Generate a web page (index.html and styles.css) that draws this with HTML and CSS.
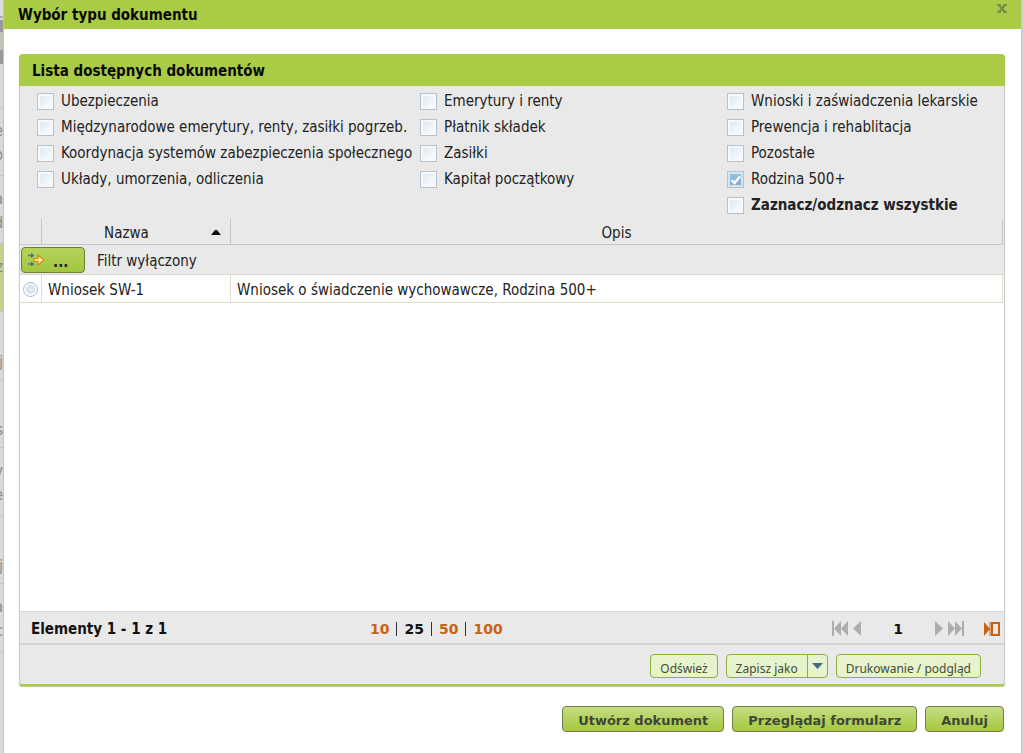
FILE: index.html
```html
<!DOCTYPE html>
<html lang="pl">
<head>
<meta charset="utf-8">
<title>Wybór typu dokumentu</title>
<link rel="stylesheet" href="styles.css">
</head>
<body>
<div class="backdrop" aria-hidden="true">
  <div class="edge-top"></div>
  <div class="edge-row"><span>e</span><span>o</span></div>
  <div class="edge-row"><span>a</span><span>d</span></div>
  <div class="edge-row selected"><span>z</span></div>
  <div class="edge-row low"><span>j</span></div>
  <div class="edge-row low"><span>s</span></div>
  <div class="edge-row"><span>y</span><span>e</span></div>
  <div class="edge-row low"><span>j</span></div>
  <div class="edge-row"><span>a</span><span>c</span></div>
</div>

<main class="dialog">
  <header class="dialog-head">
    <h1>Wybór typu dokumentu</h1>
    <button class="close" type="button" aria-label="Zamknij">
      <svg width="10" height="9" viewBox="0 0 10 9"><path d="M0 1h4M6 1h4M0 8h4M6 8h4" stroke="#75884a" stroke-width="1.4"/><path d="M2 1l6 7M8 1L2 8" stroke="#75884a" stroke-width="2"/></svg>
    </button>
  </header>

  <section class="panel">
    <h2>Lista dostępnych dokumentów</h2>

    <div class="filters">
      <div class="group">
        <label><input type="checkbox">Ubezpieczenia</label>
        <label><input type="checkbox">Międzynarodowe emerytury, renty, zasiłki pogrzeb.</label>
        <label><input type="checkbox">Koordynacja systemów zabezpieczenia społecznego</label>
        <label><input type="checkbox">Układy, umorzenia, odliczenia</label>
      </div>
      <div class="group">
        <label><input type="checkbox">Emerytury i renty</label>
        <label><input type="checkbox">Płatnik składek</label>
        <label><input type="checkbox">Zasiłki</label>
        <label><input type="checkbox">Kapitał początkowy</label>
      </div>
      <div class="group">
        <label><input type="checkbox">Wnioski i zaświadczenia lekarskie</label>
        <label><input type="checkbox">Prewencja i rehablitacja</label>
        <label><input type="checkbox">Pozostałe</label>
        <label><input type="checkbox" checked>Rodzina 500+</label>
        <label class="all"><input type="checkbox">Zaznacz/odznacz wszystkie</label>
      </div>
    </div>

    <div class="grid">
      <table>
        <colgroup><col class="col-pick"><col class="col-name"><col></colgroup>
        <thead>
          <tr class="head">
            <th></th>
            <th><div class="sortable"><span>Nazwa</span><svg width="10" height="5" viewBox="0 0 10 5"><path d="M0 5L4 0h2l4 5z" fill="#111"/></svg></div></th>
            <th>Opis</th>
          </tr>
          <tr class="filter">
            <td colspan="3"><div class="filter-line">
              <button class="filter-btn" type="button">
                <svg width="18" height="14" viewBox="0 0 18 14"><path d="M0 2.500h5M0 11h5" stroke="#5c7488" stroke-width="1.400"/><path d="M3 0l3.500 2.500L3 5zM3 8.500L6.500 11 3 13.500z" fill="#4f6a86"/><path d="M6 5.500h4V2l6 5-6 5V8.500H6z" fill="#ffe68c" stroke="#d08a1e" stroke-width="1.200"/></svg>
                <span>...</span>
              </button>
              <span>Filtr wyłączony</span>
            </div></td>
          </tr>
        </thead>
        <tbody>
          <tr>
            <td class="pick"><input type="radio" name="doc" aria-label="Wniosek SW-1"></td>
            <td>Wniosek SW-1</td>
            <td>Wniosek o świadczenie wychowawcze, Rodzina 500+</td>
          </tr>
        </tbody>
      </table>
    </div>

    <div class="pager">
      <span class="count">Elementy 1 - 1 z 1</span>
      <nav class="sizes"><a href="#">10</a><i></i><b>25</b><i></i><a href="#">50</a><i></i><a href="#">100</a></nav>
      <nav class="pages">
        <button type="button" aria-label="Pierwsza"><svg width="17" height="15" viewBox="0 0 17 15"><path d="M0 0h2v15H0zM9 0v15L2 7.500zM16 0v15L9 7.500z" fill="#adadad"/></svg></button>
        <button type="button" aria-label="Poprzednia"><svg width="8" height="15" viewBox="0 0 8 15"><path d="M8 0v15L0 7.500z" fill="#adadad"/></svg></button>
        <b>1</b>
        <button type="button" aria-label="Następna"><svg width="8" height="15" viewBox="0 0 8 15"><path d="M0 0v15l8-7.500z" fill="#adadad"/></svg></button>
        <button type="button" aria-label="Ostatnia"><svg width="17" height="15" viewBox="0 0 17 15"><path d="M15 0h2v15h-2zM8 0v15l7-7.500zM1 0v15l7-7.500z" fill="#adadad"/></svg></button>
        <button class="goto" type="button" aria-label="Przejdź do strony"><svg width="16" height="14" viewBox="0 0 16 14"><path d="M0 0l6 7-6 7z" fill="#cb6211"/><path d="M6 0v14" stroke="#cb6211" stroke-width="1"/><path d="M8 1h7v12H8z" fill="none" stroke="#cb6211" stroke-width="2"/></svg></button>
      </nav>
    </div>

    <div class="tools">
      <button type="button">Odśwież</button>
      <div class="split">
        <button type="button">Zapisz jako</button>
        <button class="more" type="button" aria-label="Więcej"><svg width="11" height="6" viewBox="0 0 11 6"><path d="M0 0h11L5.500 6z" fill="#3f6b84"/></svg></button>
      </div>
      <button type="button">Drukowanie / podgląd</button>
    </div>
  </section>

  <footer class="actions">
    <button type="button">Utwórz dokument</button>
    <button type="button">Przeglądaj formularz</button>
    <button type="button">Anuluj</button>
  </footer>
</main>
</body>
</html>
```
FILE: styles.css
```css
* { box-sizing: border-box; }

body {
  margin: 0;
  display: flex;
  height: 100vh;
  background: #cdcdcd;
  color: #222;
  font: 15px "DejaVu Sans Condensed", "DejaVu Sans", sans-serif;
}

button, input { font: inherit; color: inherit; margin: 0; padding: 0; }
button { border: 0; background: none; cursor: pointer; }
svg { display: block; }

/* page behind the dialog */
.backdrop {
  width: 4px;
  flex: none;
  overflow: hidden;
  border-right: 1px solid #c2c2c2;
  background: #dadada;
  color: #888;
}
.edge-top {
  height: 108px;
  border-bottom: 1px solid #c4c4c4;
  background: linear-gradient(#dadada 16px, #aaa 16px 18px, #dadada 18px 20px, #999 20px 32px, #c3c3b8 32px 50px, #999 50px 64px, #dadada 64px);
}
.edge-row {
  display: flex;
  flex-direction: column;
  align-items: flex-end;
  height: 68px;
  padding-top: 11px;
  border-bottom: 1px solid #c4c4c4;
  line-height: 24px;
}
.edge-row.low { padding-top: 38px; }
.edge-row.selected { background: #c1d28f; }

.dialog {
  flex: 1;
  min-width: 0;
  margin-right: 2px;
  display: flex;
  flex-direction: column;
  background: #fff;
}
.dialog-head {
  display: flex;
  justify-content: space-between;
  align-items: flex-start;
  height: 29px;
  flex: none;
  padding: 0 14px;
  background: #aacb46;
}
h1, h2 { margin: 0; font-size: 15px; font-weight: bold; color: #080a02; }
h1 { padding-top: 2px; line-height: 27px; }
.close { padding-top: 4px; }

.panel {
  flex: 1;
  min-height: 0;
  display: flex;
  flex-direction: column;
  margin: 25px 16px 0 15px;
  border: 1px solid #c9c9c9;
  border-top: 0;
  border-bottom: 2px solid #aacb46;
  border-radius: 4px 4px 3px 3px;
  background: #e9e9e9;
  box-shadow: 0 1px 1px #bcc79a;
}
h2 {
  flex: none;
  margin: 0 -1px;
  padding: 2px 0 0 13px;
  line-height: 30px;
  border-radius: 4px 4px 0 0;
  background: #aacb46;
}

.filters {
  flex: none;
  display: grid;
  grid-template-columns: 383fr 307fr 277fr;
  padding: 2px 0 1px 17px;
}
.group { display: flex; flex-direction: column; }
.group label {
  display: flex;
  align-items: center;
  gap: 7px;
  height: 26px;
  white-space: nowrap;
}
.all { font-weight: bold; }

input[type="checkbox"] {
  appearance: none;
  width: 17px;
  height: 17px;
  border: 1px solid #b5c2cd;
  background: linear-gradient(135deg, #d9e6f0, #fff);
  box-shadow: inset 0 0 0 2px #f6f9fb;
}
input[type="checkbox"]:checked {
  background:
    url("data:image/svg+xml,%3Csvg xmlns='http://www.w3.org/2000/svg' viewBox='0 0 15 15'%3E%3Cpath d='M3.500 8l3 3 5.500-6.500' fill='none' stroke='white' stroke-width='2.400'/%3E%3C/svg%3E"),
    linear-gradient(#9cc2de, #7dabce);
  box-shadow: inset 0 0 0 2px #d3e6f2;
}

.grid {
  flex: 1;
  min-height: 0;
  background: linear-gradient(#e9e9e9 56px, #fff 56px);
}
table {
  width: 100%;
  border-collapse: separate;
  border-spacing: 0;
  table-layout: fixed;
  padding-right: 1px;
}
.col-pick { width: 22px; }
.col-name { width: 189px; }
th, td { padding: 0; font-weight: normal; text-align: left; }
.head th {
  height: 26px;
  padding-top: 2px;
  text-align: center;
  border-right: 1px solid #c6c6c6;
  border-bottom: 1px solid #c6c6c6;
}
.sortable { display: grid; grid-template-columns: 1fr auto; align-items: center; padding-right: 9px; }
.filter td { height: 30px; background: #e9e9e9; border-bottom: 1px solid #d8d8cf; }
.filter-line { display: flex; align-items: center; gap: 12px; padding-left: 1px; }
.filter-line > span { padding-top: 2px; }
.filter-btn {
  display: flex;
  gap: 7px;
  width: 64px;
  height: 26px;
  padding: 5px 6px;
  border: 1px solid #6b8038;
  border-radius: 4px;
  background: linear-gradient(#b4d35c, #a2c640);
  font-weight: bold;
}
tbody td {
  height: 28px;
  padding: 2px 0 0 6px;
  background: #fff;
  border-right: 1px solid #dfdccb;
  border-bottom: 1px solid #dfdccb;
}
tbody .pick { padding-left: 3px; }
input[type="radio"] {
  appearance: none;
  display: block;
  width: 15px;
  height: 15px;
  border: 1px solid #a9b9c8;
  border-radius: 50%;
  background: radial-gradient(#e6f0f8 0, #cfe0ee 4px, #fafcfd 5px);
}

.pager {
  flex: none;
  display: grid;
  grid-template-columns: 339px 1fr auto;
  align-items: center;
  height: 34px;
  padding: 2px 4px 0 11px;
  border-top: 1px solid #d5d5d5;
  border-bottom: 2px solid #d2d2d2;
  font-weight: bold;
  color: #111;
}
.sizes, .pages b { font-family: "DejaVu Sans", sans-serif; font-size: 14px; }
.sizes { display: flex; align-items: center; }
.sizes i { width: 1px; height: 14px; margin: 0 7px; background: #333; }
.sizes a { color: #c8630f; text-decoration: none; }
.pages { display: flex; align-items: center; gap: 4px; }
.pages b { padding: 0 28px; }
.goto { margin-left: 16px; }

.tools {
  flex: none;
  display: flex;
  justify-content: flex-end;
  gap: 8px;
  padding: 9px 23px 6px;
  font: 12px "Noto Sans", sans-serif;
  color: #454c3c;
}
.tools > * {
  height: 24px;
  border: 1px solid #8fae40;
  border-radius: 4px;
  background: #e6f3cd;
}
.tools button { padding: 4px 9px 0; }
.split { display: flex; }
.split .more {
  padding: 0 4px;
  border-left: 1px solid #8fae40;
}

.actions {
  flex: none;
  display: flex;
  justify-content: flex-end;
  gap: 8px;
  padding: 20px 17px 21px;
}
.actions button {
  height: 26px;
  padding: 3px 15px 0;
  border: 1px solid #6f7f4a;
  border-radius: 4px;
  background: linear-gradient(#c6dd86, #a4c83c);
  color: #3f463a;
  font: bold 13px "DejaVu Sans", sans-serif;
}
```
